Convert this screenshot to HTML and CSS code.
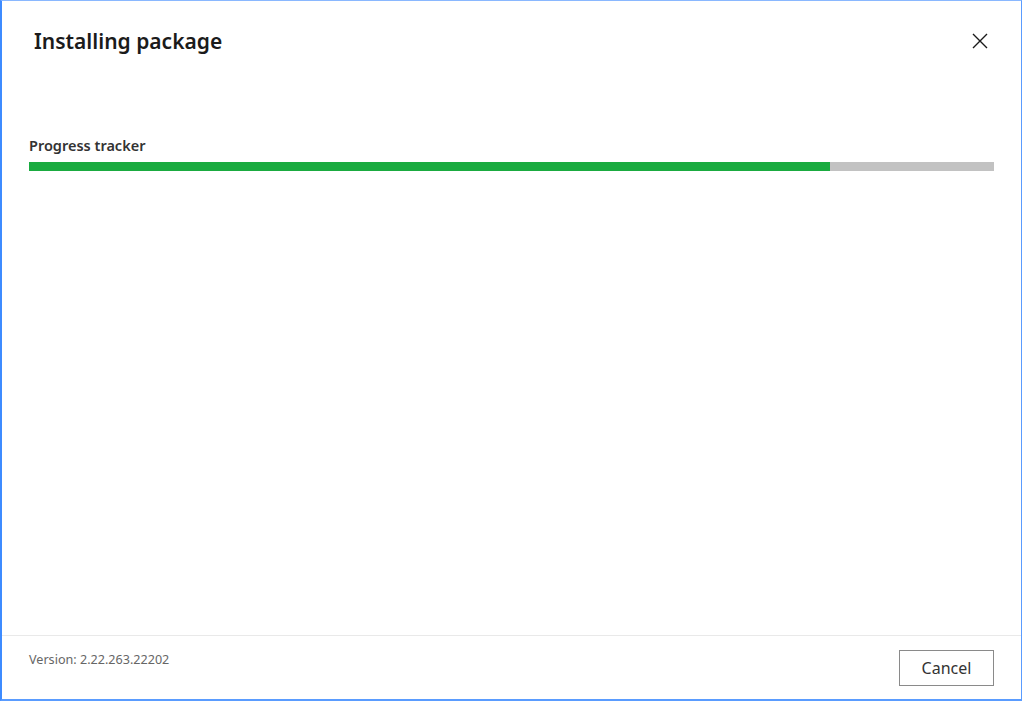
FILE: index.html
```html
<!DOCTYPE html>
<html lang="en">
<head>
<meta charset="utf-8">
<title>Installing package</title>
<link rel="stylesheet" href="styles.css">
</head>
<body>
<div class="window">
  <header class="titlebar">
    <h1 class="title">Installing package</h1>
    <button class="close" aria-label="Close">
      <svg width="16" height="16" viewBox="0 0 16 16"><path d="M1 1L15 15M15 1L1 15" stroke="#1a1a1a" stroke-width="1.4" fill="none"/></svg>
    </button>
  </header>
  <main class="content">
    <div class="label">Progress tracker</div>
    <div class="track"><div class="fill" style="width:83%"></div></div>
  </main>
  <footer class="footer">
    <span class="version">Version: 2.22.263.22202</span>
    <button class="cancel">Cancel</button>
  </footer>
</div>
</body>
</html>
```
FILE: styles.css
```css
html, body {
  margin: 0;
  padding: 0;
  background: #ffffff;
}
body {
  width: 1023px;
  height: 701px;
  overflow: hidden;
  font-family: "Noto Sans", "Open Sans", sans-serif;
}
.window {
  box-sizing: border-box;
  width: 1022px;
  height: 701px;
  border-top: 1px solid #8ab8ff;
  border-left: 2px solid #3d8bff;
  border-right: 1px solid #5a9cff;
  border-bottom: 2px solid #5a9cff;
  display: flex;
  flex-direction: column;
  background: #fff;
}
.titlebar {
  display: flex;
  align-items: center;
  justify-content: space-between;
  padding: 23px 33px 0 32px;
  height: 34px;
}
.title {
  margin: 0;
  font-size: 21px;
  font-weight: 600;
  color: #1b1b1b;
  letter-spacing: 0;
}
.close {
  border: 0;
  background: none;
  padding: 0;
  width: 16px;
  height: 16px;
  display: flex;
  cursor: pointer;
}
.content {
  flex: 1;
  padding: 77px 27px 0 27px;
}
.label {
  font-size: 14.5px;
  font-weight: 600;
  color: #333333;
  line-height: 20px;
  margin-bottom: 7px;
}
.track {
  height: 9px;
  background: #c2c2c2;
}
.fill {
  height: 100%;
  background: #1aab40;
}
.footer {
  border-top: 1px solid #e9e9e9;
  display: flex;
  justify-content: space-between;
  align-items: flex-start;
  padding: 14px 27px 13px 27px;
}
.version {
  font-size: 12.6px;
  color: #666666;
  line-height: 18px;
  margin-top: 1px;
}
.cancel {
  width: 95px;
  height: 36px;
  border: 1px solid #8a8a8a;
  background: #ffffff;
  font-family: inherit;
  font-size: 16px;
  color: #333333;
  padding: 0;
}
```
